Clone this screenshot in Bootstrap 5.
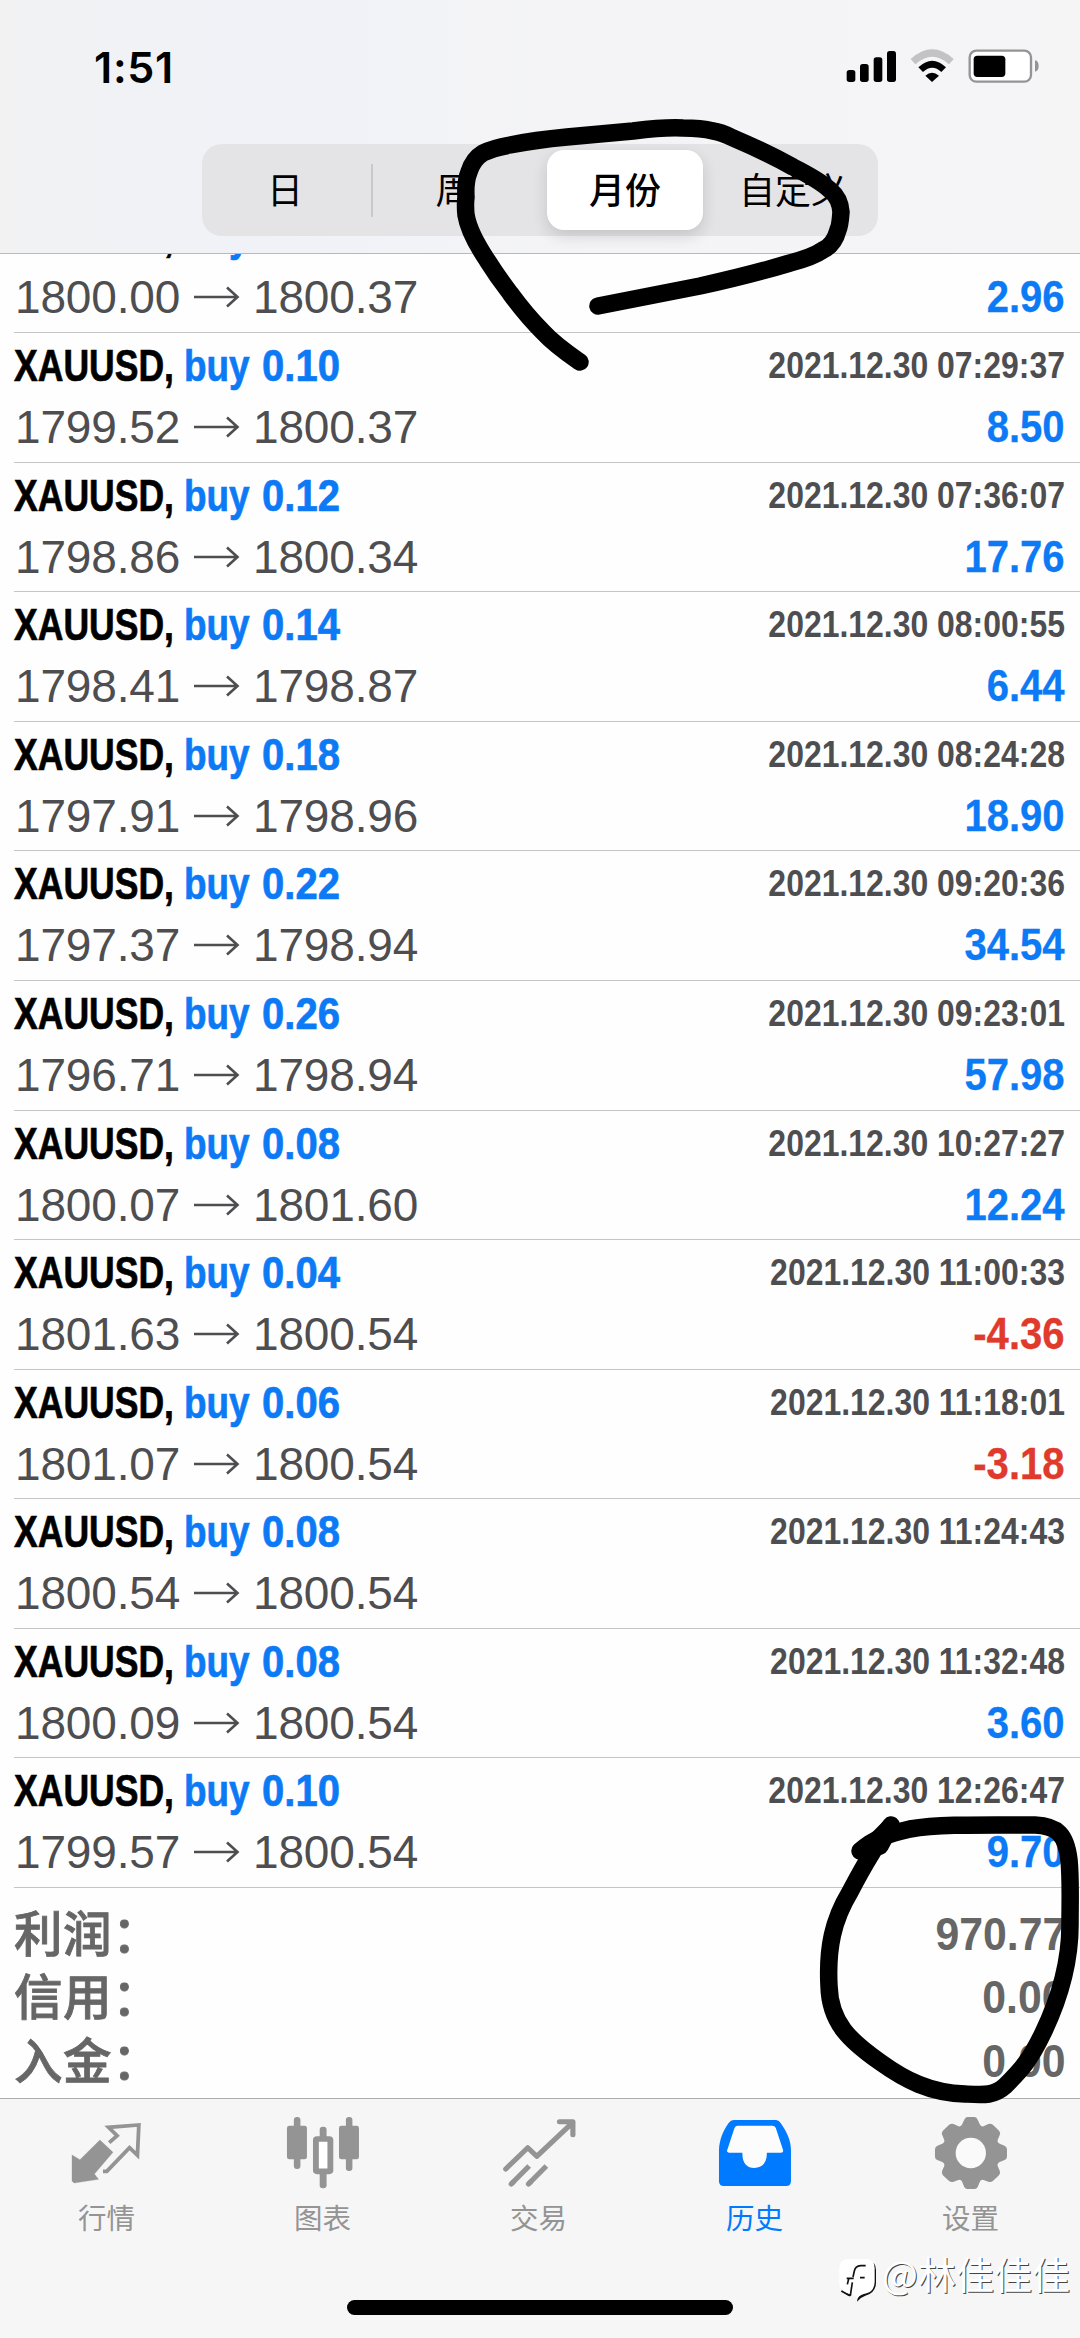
<!DOCTYPE html>
<html lang="zh-CN">
<head>
<meta charset="utf-8">
<meta name="viewport" content="width=device-width, initial-scale=1">
<title>历史</title>
<link rel="stylesheet" href="https://cdn.jsdelivr.net/npm/bootstrap@5.3.0/dist/css/bootstrap.min.css">
<style>
body{width:1080px;height:2338px;overflow:hidden;background:#fefefe;font-family:"Liberation Sans","Noto Sans CJK SC",sans-serif;color:#4e4e51}
.phone{height:2338px}
.topbar{height:254px;flex:none;background:linear-gradient(90deg,#f2f2f3 0,#f0f2f8 25%,#f4f4f6 50%,#f5f5f6 100%);border-bottom:1px solid #b9b9bc}
.statusbar{height:144px;padding:30px 20px 0 94px}
.clock{font:600 43px/74px Inter,sans-serif;letter-spacing:.7px;color:#000}
.segments{width:676px;height:92px;border-radius:20px;background:#e4e4e7;color:#000;font:400 36px/76px "Noto Sans CJK SC",sans-serif;padding:6px 7px}
.seg{width:169px;height:80px;text-align:center;white-space:nowrap}
.seg-day{width:162px;padding-right:10px}
.seg-line{width:2px;height:53px;background:#c9c9cd;margin-right:-2px}
.seg-week{width:176px;padding-right:11px}
.seg-on{width:156px;background:#fff;border-radius:17px;font-weight:500;box-shadow:0 6px 16px rgba(0,0,0,.14)}
.seg-custom{width:168px;padding-left:12px}
.deals{height:1634px;flex:none}
.deal{height:129.58px;flex:none;margin-left:14px;padding-right:15px;border-bottom:1px solid #c5c5c8;white-space:nowrap}
.line1{height:67px;line-height:65px;font-size:45px;font-weight:700}
.line2{height:53px;line-height:54px;font-size:46px;letter-spacing:-.15px}
.sym,.side,.lot{transform-origin:0 0;-webkit-text-stroke:.7px currentColor}
.sym{width:170px;color:#000;transform:scaleX(.79)}
.side{width:78px;transform:scaleX(.82)}
.lot{transform:scaleX(.89)}
.blue{color:#0d7af5}.red{color:#e03a2c}
.when{font-size:36.5px;line-height:65px;transform:scaleX(.875);transform-origin:100% 0}
.gain{font-size:45px;letter-spacing:0;font-weight:700;transform:scaleX(.89);transform-origin:100% 0;-webkit-text-stroke:.3px currentColor}
.price{width:166px;padding-left:1px}.arrow{width:72px;height:53px}
.totals{height:210px;flex:none;padding:15px 14px 0;color:#666}
.total{height:63.3px;line-height:63.3px}
.total-name{font:500 48.5px/57px "Noto Sans CJK SC",sans-serif;letter-spacing:.6px;-webkit-text-stroke:.8px currentColor}
.total-sum{font-size:46.5px;font-weight:700;transform:scaleX(.92);transform-origin:100% 0}
.tabs{flex:1;background:#f6f6f6;border-top:1px solid #acacae;color:#949494}
.tab{width:216px;text-align:center;font:400 28.5px/34px "Noto Sans CJK SC",sans-serif}
.tab svg{display:block;width:216px;height:100px}
.tab span{display:block;margin-left:-3px;margin-top:1px}
.tab.current{color:#007aff}
.homebar{width:386px;height:15px;border-radius:8px;background:#000;margin:66px auto 0}
.scribble{left:0;top:0;width:1080px;height:2338px;pointer-events:none}
.watermark{left:838px;top:2248px;height:56px;color:#fff;font:400 38px/50px "Noto Sans CJK SC",sans-serif;text-shadow:1px 1px 0 #444;white-space:nowrap}
.watermark svg{width:40px;height:56px;margin-right:4px}
</style>
<script src="https://cdn.jsdelivr.net/npm/bootstrap@5.3.0/dist/js/bootstrap.bundle.min.js"></script>
</head>
<body>
<div class="phone d-flex flex-column position-relative">
  <header class="topbar">
    <div class="statusbar d-flex justify-content-between align-items-start">
      <div class="clock">1:51</div>
      <svg width="240" height="80" viewBox="0 0 720 240">
        <rect x="80" y="120" width="26" height="36" rx="8"/><rect x="120" y="102" width="26" height="54" rx="8"/><rect x="161" y="82" width="26" height="74" rx="8"/><rect x="201" y="63" width="27" height="93" rx="8"/>
        <path d="M279 95Q337 43 394 95" fill="none" stroke="#c3c3c5" stroke-width="21"/>
        <path d="M302 119Q337 86 371 119" fill="none" stroke="#000" stroke-width="20"/>
        <path d="M316 137Q336 119 357 137L336 156Z"/>
        <rect x="449" y="62" width="184" height="93" rx="20" fill="#fff" stroke="#949496" stroke-width="7"/>
        <rect x="461" y="77" width="95" height="64" rx="11"/><path d="M645 91Q656 93 656 108T645 125Z" fill="#949496"/>
      </svg>
    </div>
    <div class="segments d-flex align-items-center mx-auto">
      <div class="seg seg-day">日</div><div class="seg-line"></div><div class="seg seg-week">周</div><div class="seg seg-on">月份</div><div class="seg seg-custom">自定义</div>
    </div>
  </header>
  <main class="deals d-flex flex-column justify-content-end overflow-hidden" id="deals"></main>
  <section class="totals">
    <div class="total d-flex justify-content-between"><span class="total-name">利润：</span><span class="total-sum">970.77</span></div>
    <div class="total d-flex justify-content-between"><span class="total-name">信用：</span><span class="total-sum">0.00</span></div>
    <div class="total d-flex justify-content-between"><span class="total-name">入金：</span><span class="total-sum">0.00</span></div>
  </section>
  <nav class="tabs">
    <div class="d-flex">
      <div class="tab"><svg viewBox="0 27 627 300" preserveAspectRatio="none" fill="currentColor">
        <path d="M209 195L232 209L290 150L328 187L274 252L286 268L215 279L209 273Z" stroke="currentColor" stroke-width="1"/>
        <path d="M317 158L340 137L315 112L403 105L399 196L376 173L310 244H299" fill="none" stroke="currentColor" stroke-width="11" stroke-linejoin="miter"/></svg><span>行情</span></div>
      <div class="tab"><svg viewBox="627 27 627 300" preserveAspectRatio="none" fill="currentColor">
        <rect x="833" y="107" width="58" height="101" rx="7"/><rect x="853" y="81" width="19" height="156" rx="9"/><rect x="984" y="107" width="58" height="101" rx="7"/><rect x="1004" y="81" width="19" height="162" rx="9"/><rect x="928" y="110" width="20" height="40" rx="9"/><rect x="928" y="240" width="20" height="55" rx="9"/><rect x="917" y="147" width="42" height="97" rx="3" fill="#fff" stroke="currentColor" stroke-width="17"/></svg><span>图表</span></div>
      <div class="tab"><svg viewBox="1254 27 627 300" preserveAspectRatio="none" fill="none" stroke="currentColor" stroke-width="15" stroke-linecap="round">
        <path d="M1468 237L1532 173L1558 199L1663 97M1624 95H1663V134" stroke-linejoin="round"/><path d="M1484 282L1536 228M1534 282L1586 228" stroke-linecap="butt"/><path d="M1484 282L1490 276M1534 282L1540 276"/></svg><span>交易</span></div>
      <div class="tab current"><svg viewBox="314 27 627 300" preserveAspectRatio="none" fill="currentColor">
        <path d="M563 90H686Q695 91 699 99C718 126 729 153 729 180V274Q729 288 715 288H534Q520 288 520 274V180C521 150 532 122 548 99Q554 90 563 90Z"/><path d="M574 107H675Q682 107 685 114L706 180Q708 188 700 188H659C660 218 645 234 623 234S587 218 588 188H549Q541 187 544 180L565 114Q568 107 574 107Z" fill="#fcfcfc"/></svg><span>历史</span></div>
      <div class="tab"><svg viewBox="941 27 627 300" preserveAspectRatio="none" fill="currentColor">
        <path d="M1241 81H1262Q1268 82 1271 89L1277 103Q1280 111 1288 109L1302 102Q1309 100 1315 104L1333 122Q1338 128 1335 135L1329 150Q1327 157 1335 161L1349 167Q1356 171 1356 178V200Q1356 207 1349 210L1335 216Q1327 220 1329 228L1335 242Q1338 250 1333 256L1315 273Q1309 277 1302 275L1288 270Q1280 268 1277 276L1271 291Q1268 297 1262 297H1241Q1235 297 1232 291L1226 276Q1223 268 1215 270L1201 275Q1194 277 1188 273L1170 256Q1165 250 1168 242L1174 228Q1176 220 1168 216L1154 210Q1147 207 1147 200V178Q1147 171 1154 167L1168 161Q1176 157 1174 150L1168 135Q1165 128 1170 122L1188 104Q1194 100 1201 102L1215 109Q1223 111 1226 103L1232 89Q1235 82 1241 81Z"/><ellipse cx="1251" cy="189" rx="44" ry="46" fill="#fafafa"/></svg><span>设置</span></div>
    </div>
    <div class="homebar"></div>
  </nav>
  <div class="watermark position-absolute d-flex">
    <svg viewBox="54 24 120 168"><path d="M80 63H146Q168 66 168 90V130Q166 160 136 167Q121 172 111 185Q112 170 124 163L96 160L91 169Q66 160 63 140Z" fill="#111"/><path d="M80 57H142Q164 60 164 84V126Q163 153 140 160Q122 163 111 176Q111 166 96 164L92 163Q60 160 58 130V84Q60 60 80 57Z" fill="#fff"/><path d="M137 77H122Q106 78 103 93L99 111M80 115H101M120 113H134M97 127L91 167M86 117L82 133M64 153L90 167" fill="none" stroke="#111" stroke-width="5"/></svg><span>@林佳佳佳</span>
  </div>
  <svg class="scribble position-absolute" viewBox="0 0 1080 2338" fill="none" stroke="#000" stroke-width="17.5" stroke-linecap="round" stroke-linejoin="round">
    <path d="M580 362C567 353 555 345 543 332Q526 315 510 293Q497 276 487 260Q469 233 466 215Q465 205 466 197Q465 182 469 172Q473 159 483 153Q493 148 510 145Q535 140 567 137L633 131Q665 127 683 128Q701 128 713 131Q721 132 733 138Q766 152 793 167Q819 180 830 190Q840 198 841 212Q840 226 838 230Q834 245 823 250Q813 257 790 263Q750 275 700 286L598 306"/>
    <path d="M860 1851C874 1838 889 1834 910 1829C940 1824 980 1825 1035 1825C1057 1826 1066 1834 1069 1860C1071 1880 1070 1900 1070 1925C1070 1970 1055 2008 1043 2033C1030 2060 1022 2069 1005 2086C994 2096 984 2095 965 2094C930 2093 905 2080 880 2062C850 2041 830 2023 829 1986C827 1948 833 1920 850 1892C862 1869 877 1843 891 1825"/>
    <path d="M862 1851L876 1841L890 1827L880 1846Z"/>
  </svg>
</div>
<script>
const deals = [
  ['0.08','','1800.00','1800.37','2.96'],
  ['0.10','07:29:37','1799.52','1800.37','8.50'],
  ['0.12','07:36:07','1798.86','1800.34','17.76'],
  ['0.14','08:00:55','1798.41','1798.87','6.44'],
  ['0.18','08:24:28','1797.91','1798.96','18.90'],
  ['0.22','09:20:36','1797.37','1798.94','34.54'],
  ['0.26','09:23:01','1796.71','1798.94','57.98'],
  ['0.08','10:27:27','1800.07','1801.60','12.24'],
  ['0.04','11:00:33','1801.63','1800.54','-4.36'],
  ['0.06','11:18:01','1801.07','1800.54','-3.18'],
  ['0.08','11:24:43','1800.54','1800.54',''],
  ['0.08','11:32:48','1800.09','1800.54','3.60'],
  ['0.10','12:26:47','1799.57','1800.54','9.70']
];
document.getElementById('deals').innerHTML = deals.map(([lot, time, open, close, gain]) => `
  <article class="deal">
    <div class="line1 d-flex">
      <span class="sym">XAUUSD,</span><span class="side blue">buy</span><span class="lot blue">${lot}</span>
      <span class="when ms-auto">${time ? '2021.12.30 ' + time : ''}</span>
    </div>
    <div class="line2 d-flex">
      <span class="price">${open}</span>
      <svg class="arrow" viewBox="0 0 72 53"><path d="M14 27H57M47 17.500L57.500 27L47 36.500" fill="none" stroke="#4e4e51" stroke-width="2.600"/></svg>
      <span class="price">${close}</span>
      <span class="gain ms-auto ${gain[0] === '-' ? 'red' : 'blue'}">${gain}</span>
    </div>
  </article>`).join('');
</script>
</body>
</html>
